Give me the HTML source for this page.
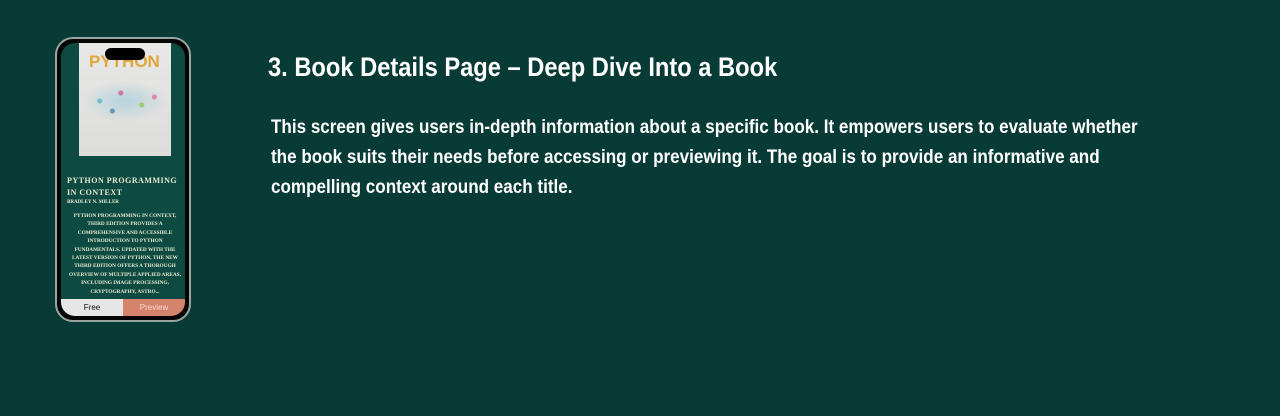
<!DOCTYPE html>
<html><head><meta charset="utf-8"><style>
body{margin:0;width:1280px;height:416px;background:#083b36;overflow:hidden;position:relative;font-family:"Liberation Sans",sans-serif;color:#fff}
.phone{position:absolute;left:55px;top:37px;width:132px;height:281px;border:2px solid #9aa5a2;border-radius:18px;background:#050505}
.screen{position:absolute;left:4px;top:4px;right:4px;bottom:4px;border-radius:14px;background:#0d4a42;overflow:hidden}
.cover{position:absolute;left:18px;top:0;width:92px;height:113px;background:linear-gradient(#e8e8e6,#dcdcda);}
.cover b{position:absolute;left:10px;top:9px;font:bold 17px "Liberation Sans",sans-serif;color:#e0a63a}
.dots{position:absolute;left:4px;top:38px;width:84px;height:40px;background:radial-gradient(circle at 20% 50%,#7bc 0 2px,transparent 3px),radial-gradient(circle at 45% 30%,#c7a 0 2px,transparent 3px),radial-gradient(circle at 70% 60%,#9c7 0 2px,transparent 3px),radial-gradient(circle at 85% 40%,#d8a 0 2px,transparent 3px),radial-gradient(circle at 35% 75%,#69b 0 2px,transparent 3px),radial-gradient(ellipse,#b5d3dc,transparent 72%)}
.notch{position:absolute;left:44px;top:5px;width:40px;height:12px;border-radius:7px;background:#000}
.t{position:absolute;left:6px;top:132px;font:bold 8px "Liberation Serif",serif;letter-spacing:.5px;color:#e8ead0;line-height:12px;width:120px}
.a{position:absolute;left:6px;top:157px;font:bold 5px serif;color:#e8ead0}
.d{position:absolute;left:4px;top:169px;width:120px;text-align:center;font:bold 5.3px/8.4px serif;color:#e8ead0}
.btn{position:absolute;bottom:0;height:17px;font:8px "Liberation Sans",sans-serif;line-height:17px;text-align:center}
h1{position:absolute;left:268px;top:52px;margin:0;font-size:27px;font-weight:bold;white-space:nowrap;transform:scaleX(0.877);transform-origin:0 0}
p{position:absolute;left:271px;top:113px;margin:0;font-size:19px;font-weight:bold;line-height:30px;white-space:nowrap;transform:scaleX(0.898);transform-origin:0 0}
</style></head><body>
<div class="phone"><div class="screen">
<div class="cover"><b>PYTHON</b><div class="dots"></div></div>
<div class="notch"></div>
<div class="t">PYTHON PROGRAMMING IN CONTEXT</div>
<div class="a">BRADLEY N. MILLER</div>
<div class="d">PYTHON PROGRAMMING IN CONTEXT, THIRD EDITION PROVIDES A COMPREHENSIVE AND ACCESSIBLE INTRODUCTION TO PYTHON FUNDAMENTALS. UPDATED WITH THE LATEST VERSION OF PYTHON, THE NEW THIRD EDITION OFFERS A THOROUGH OVERVIEW OF MULTIPLE APPLIED AREAS, INCLUDING IMAGE PROCESSING, CRYPTOGRAPHY, ASTRO...</div>
<div class="btn" style="left:0;width:62px;background:#e6e6e6;color:#111">Free</div>
<div class="btn" style="left:62px;right:0;background:#d5836c;color:#f6d8cc">Preview</div>
</div></div>
<h1>3. Book Details Page – Deep Dive Into a Book</h1>
<p>This screen gives users in-depth information about a specific book. It empowers users to evaluate whether<br>the book suits their needs before accessing or previewing it. The goal is to provide an informative and<br>compelling context around each title.</p>
</body></html>
